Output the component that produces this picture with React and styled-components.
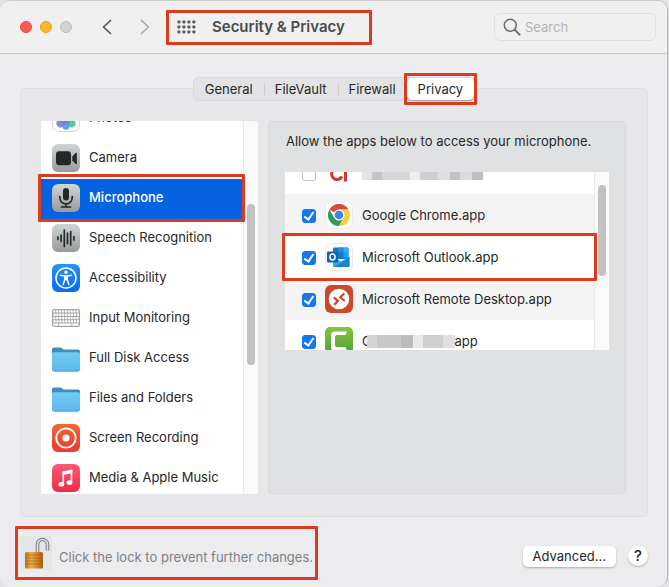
import React from "react"
import styled, { createGlobalStyle, css } from 'styled-components';

const panes = [
    { name: 'Photos', Icon: PhotosIcon },
    { name: 'Camera', Icon: CameraIcon },
    { name: 'Microphone', Icon: MicrophoneIcon },
    { name: 'Speech Recognition', Icon: SpeechIcon },
    { name: 'Accessibility', Icon: AccessibilityIcon },
    { name: 'Input Monitoring', Icon: KeyboardIcon },
    { name: 'Full Disk Access', Icon: FolderIcon },
    { name: 'Files and Folders', Icon: FolderIcon },
    { name: 'Screen Recording', Icon: RecordingIcon },
    { name: 'Media & Apple Music', Icon: MusicIcon },
]

const apps = [
    { id: 'hidden', Icon: RedIcon, mask: 'top', checked: false },
    { id: 'chrome', name: 'Google Chrome.app', Icon: ChromeIcon, checked: true },
    { id: 'outlook', name: 'Microsoft Outlook.app', Icon: OutlookIcon, checked: true },
    { id: 'remote', name: 'Microsoft Remote Desktop.app', Icon: RemoteIcon, checked: true },
    { id: 'recorder', Icon: RecorderIcon, mask: 'bottom', checked: true },
]

const tabs = ['General', 'FileVault', 'Firewall', 'Privacy']

export default function App() {
    return (
        <>
            <GlobalStyle />
            <WindowStyle>
                <HeaderStyle>
                    <LightsStyle>
                        <Light $color="#fb5b53" $edge="#df4a43" aria-label="Close" />
                        <Light $color="#fcb827" $edge="#dfa023" aria-label="Minimize" />
                        <Light $color="#d3d3d4" $edge="#bdbdbe" aria-label="Zoom" disabled />
                    </LightsStyle>
                    <NavStyle>
                        <IconBtn aria-label="Back">
                            <svg width="10" height="16" viewBox="0 0 10 16" fill="none" stroke="#555" strokeWidth="1.7" strokeLinecap="round" strokeLinejoin="round"><path d="M8.5 1.5 1.5 8l7 6.5" /></svg>
                        </IconBtn>
                        <IconBtn aria-label="Forward">
                            <svg width="10" height="16" viewBox="0 0 10 16" fill="none" stroke="#aaa" strokeWidth="1.7" strokeLinecap="round" strokeLinejoin="round"><path d="m1.5 1.5 7 6.5-7 6.5" /></svg>
                        </IconBtn>
                    </NavStyle>
                    <TitleStyle>
                        <IconBtn aria-label="Show All"><GridIcon /></IconBtn>
                        <h1>Security &amp; Privacy</h1>
                    </TitleStyle>
                    <SearchStyle>
                        <svg width="18" height="18" viewBox="0 0 18 18" fill="none" stroke="#6c6c6e" strokeWidth="1.5" strokeLinecap="round"><circle cx="7.3" cy="7.3" r="6" /><path d="m11.8 11.8 4.8 4.8" strokeWidth="2" /></svg>
                        <input type="search" placeholder="Search" aria-label="Search" />
                    </SearchStyle>
                </HeaderStyle>

                <BodyStyle>
                    <TabsStyle role="tablist">
                        {tabs.map((tab) => <Tab key={tab} role="tab" aria-selected={tab === 'Privacy'} $active={tab === 'Privacy'}>{tab}</Tab>)}
                    </TabsStyle>
                    <PanelStyle>
                        <SidebarStyle>
                            <ScrollStyle>
                                <PaneList>
                                    {panes.map(({ name, Icon }) => (
                                        <PaneRow key={name} $active={name === 'Microphone'}>
                                            <Icon />
                                            <span>{name}</span>
                                        </PaneRow>
                                    ))}
                                </PaneList>
                                <Track><Thumb $top={83} $height={161} /></Track>
                            </ScrollStyle>
                            <PaneMark />
                        </SidebarStyle>
                        <AccessStyle>
                            <p>Allow the apps below to access your microphone.</p>
                            <AppsStyle>
                                <ScrollStyle>
                                    <AppList>
                                        {apps.map(({ id, name, Icon, mask, checked }) => (
                                            <AppRow key={id}>
                                                <Check type="checkbox" id={id} defaultChecked={checked} aria-label={mask && 'App'} />
                                                <Icon />
                                                {name && <label htmlFor={id}>{name}</label>}
                                                {mask === 'top' && <MaskTop />}
                                                {mask === 'bottom' && <label htmlFor={id}>C<MaskBottom />app</label>}
                                            </AppRow>
                                        ))}
                                    </AppList>
                                    <Track><Thumb $top={13} $height={91} /></Track>
                                </ScrollStyle>
                                <AppMark />
                            </AppsStyle>
                        </AccessStyle>
                    </PanelStyle>
                </BodyStyle>

                <FooterStyle>
                    <LockStyle>
                        <LockBtn aria-label="Lock"><LockIcon /></LockBtn>
                        <span>Click the lock to prevent further changes.</span>
                    </LockStyle>
                    <ActionsStyle>
                        <Advanced>Advanced...</Advanced>
                        <Help>?</Help>
                    </ActionsStyle>
                </FooterStyle>
            </WindowStyle>
        </>
    )
}

function GridIcon() {
    return (
        <svg width="19" height="14" viewBox="0 0 19 14" fill="#5c5c5e">
            {[0, 5, 10].map((y) => [0, 5, 10, 15].map((x) => <rect key={`${x}-${y}`} x={x + 0.4} y={y + 0.4} width="3" height="3" rx="0.8" />))}
        </svg>
    )
}

function PhotosIcon() {
    const petals = ['#f7a13a', '#f3d33b', '#8fcb48', '#4fb886', '#3f97e0', '#7a72d2', '#b968c2', '#ee6a5f']
    return (
        <svg width="28" height="28" viewBox="0 0 28 28">
            <rect x="0.5" y="0.5" width="27" height="27" rx="6.5" fill="#fff" stroke="#d4d4d6" />
            {petals.map((fill, i) => <rect key={fill} x="10.3" y="2.2" width="7.4" height="11.3" rx="3.7" fill={fill} opacity="0.85" transform={`rotate(${i * 45} 14 14)`} />)}
        </svg>
    )
}

function GrayTile({ children }) {
    return (
        <svg width="28" height="28" viewBox="0 0 28 28">
            <defs>
                <linearGradient id="gray-tile" x2="0" y2="1"><stop stopColor="#ced6d5" /><stop offset="1" stopColor="#999a9b" /></linearGradient>
            </defs>
            <rect width="28" height="28" rx="6" fill="url(#gray-tile)" />
            {children}
        </svg>
    )
}

function CameraIcon() {
    return (
        <GrayTile>
            <rect x="4" y="7.3" width="15" height="14" rx="3.2" fill="#252729" />
            <path d="M20.3 12.6 23.6 9q1.3-1 1.3.7v9.6q0 1.7-1.3.7l-3.3-3.6z" fill="#252729" />
        </GrayTile>
    )
}

function MicrophoneIcon() {
    return (
        <GrayTile>
            <rect x="11" y="4" width="6" height="12.5" rx="3" fill="#252729" />
            <path d="M7.8 12.5v1.2a6.2 6.2 0 0 0 12.4 0v-1.2M14 20v2.8M9.5 23h9" fill="none" stroke="#252729" strokeWidth="1.7" strokeLinecap="round" />
        </GrayTile>
    )
}

function SpeechIcon() {
    return (
        <GrayTile>
            <path d="M5.9 13v2.5M9.1 11v6.5M12.3 6v16.5M15.5 9v10.5M18.7 7.5v13.5M21.9 12.5v3.5" fill="none" stroke="#252729" strokeWidth="1.7" strokeLinecap="round" />
        </GrayTile>
    )
}

function AccessibilityIcon() {
    return (
        <svg width="28" height="28" viewBox="0 0 28 28">
            <defs>
                <linearGradient id="blue-tile" x2="0" y2="1"><stop stopColor="#2994f8" /><stop offset="1" stopColor="#076bf0" /></linearGradient>
            </defs>
            <rect width="28" height="28" rx="6" fill="url(#blue-tile)" />
            <circle cx="14" cy="14" r="10" fill="none" stroke="#fff" strokeWidth="1.5" />
            <circle cx="14" cy="8.3" r="1.7" fill="#fff" />
            <path d="M8.7 11.2 12.8 12v3.3L11.2 20.5M19.3 11.2 15.2 12v3.3l1.6 5.2" fill="none" stroke="#fff" strokeWidth="1.4" strokeLinecap="round" strokeLinejoin="round" />
            <path d="M12.3 11.4h3.4v5h-3.4z" fill="#fff" />
        </svg>
    )
}

function KeyboardIcon() {
    return (
        <svg width="28" height="28" viewBox="0 0 28 28">
            <rect x="0.5" y="5.5" width="27" height="17" rx="1" fill="#a6a7a9" stroke="#a7a8aa" />
            {[0, 1, 2, 3].map((row) => Array.from({ length: 9 }, (_, i) => (
                <rect key={`${row}-${i}`} x={1.2 + i * 2.9 + (row % 2) * 0.3} y={6.3 + row * 3.3} width="2.2" height="2.3" rx="0.4" fill="#fff" />
            )))}
            <path d="M1.2 19.6h5v2.2h-5zM7 19.6h12.5v2.2H7zM20.3 19.6h6.2v2.2h-6.2z" fill="#fff" />
        </svg>
    )
}

function FolderIcon() {
    return (
        <svg width="28" height="28" viewBox="0 0 28 28">
            <defs>
                <linearGradient id="folder" x2="0" y2="1"><stop stopColor="#72c9f3" /><stop offset="1" stopColor="#5bb9ea" /></linearGradient>
            </defs>
            <path d="M0 5.5q0-2 2-2h6q1.2 0 2 .8l.8.7q.7.5 1.7.5H26q2 0 2 2V14H0z" fill="#3e8dbd" />
            <path d="M0 10q0-1.7 1.7-1.7h24.6Q28 8.3 28 10v15q0 2.5-2.5 2.5h-23Q0 27.5 0 25z" fill="url(#folder)" />
            <path d="M.5 25.5q.3 1.7 2 1.7h23q1.7 0 2-1.7" fill="none" stroke="#4aa5d3" strokeWidth="0.8" />
        </svg>
    )
}

function RecordingIcon() {
    return (
        <svg width="28" height="28" viewBox="0 0 28 28">
            <defs>
                <linearGradient id="orange-tile" x2="0" y2="1"><stop stopColor="#f4672f" /><stop offset="1" stopColor="#ee3739" /></linearGradient>
            </defs>
            <rect width="28" height="28" rx="6" fill="url(#orange-tile)" />
            <circle cx="14" cy="14" r="9.7" fill="none" stroke="#fff" strokeWidth="1.8" />
            <circle cx="14" cy="14" r="3.6" fill="#fff" />
        </svg>
    )
}

function MusicIcon() {
    return (
        <svg width="28" height="28" viewBox="0 0 28 28">
            <defs>
                <linearGradient id="pink-tile" x2="0" y2="1"><stop stopColor="#f75a74" /><stop offset="1" stopColor="#f52a47" /></linearGradient>
            </defs>
            <rect width="28" height="28" rx="6" fill="url(#pink-tile)" />
            <path d="M11.3 19.5V8.3l8.2-1.8v11.2" fill="none" stroke="#fff" strokeWidth="1.6" strokeLinejoin="round" />
            <path d="M10.5 7.7 20.3 5.5v3.6l-9.8 2.2z" fill="#fff" />
            <ellipse cx="9.3" cy="20.3" rx="2.9" ry="2.3" fill="#fff" />
            <ellipse cx="17.5" cy="18.5" rx="2.9" ry="2.3" fill="#fff" />
        </svg>
    )
}

function RedIcon() {
    return (
        <svg width="28" height="28" viewBox="0 0 28 28" fill="none" stroke="#d2342f" strokeWidth="3">
            <path d="M17 17.5A5.5 5.5 0 1 1 17 12.5M20.5 7v15.5" />
        </svg>
    )
}

function ChromeIcon() {
    return (
        <svg width="28" height="28" viewBox="0 0 28 28">
            <rect x="0.5" y="0.5" width="27" height="27" rx="6" fill="#fff" stroke="#e9e9ea" />
            <path d="M14 14 4.47 8.5A11 11 0 0 1 23.53 8.5L14 8.5z" fill="#d9483b" />
            <path d="M4.47 8.5A11 11 0 0 0 14 25L18.8 16.7 14 14 9.2 16.7z" fill="#2e9c57" />
            <path d="M23.53 8.5A11 11 0 0 1 14 25l4.8-8.2L14 8.5z" fill="#f8cd3e" />
            <circle cx="14" cy="14" r="5.5" fill="#fff" />
            <circle cx="14" cy="14" r="4.3" fill="#4581ea" />
        </svg>
    )
}

function OutlookIcon() {
    return (
        <svg width="28" height="28" viewBox="0 0 28 28">
            <rect x="0.5" y="0.5" width="27" height="27" rx="6" fill="#fff" stroke="#e9e9ea" />
            <path d="M9 4.5h13.5q1 0 1 1V16H8V5.5q0-1 1-1z" fill="#1579cb" />
            <path d="M13 4.5h5.5v5H13z" fill="#1d92dd" />
            <path d="M18.5 4.5h4q1 0 1 1v4h-5z" fill="#39aff0" />
            <path d="M18.5 9.5h5v5h-5z" fill="#28a0e8" />
            <path d="M8 13.5 16 18.5l8.5-5V23q0 1-1 1H9q-1 0-1-1z" fill="#35a9e7" />
            <path d="m9 24 15.5-10v9q0 1-1 1z" fill="#1b83d0" />
            <rect x="2" y="8.5" width="11" height="11" rx="1" fill="#0e64b5" />
            <ellipse cx="7.5" cy="14" rx="2.6" ry="2.9" fill="none" stroke="#fff" strokeWidth="1.5" />
        </svg>
    )
}

function RemoteIcon() {
    return (
        <svg width="28" height="28" viewBox="0 0 28 28">
            <rect width="28" height="28" rx="6" fill="#cb472d" />
            <circle cx="14" cy="14" r="10.3" fill="#fff" />
            <path d="m8.8 12.3 4.2 3.5-3.7 3.9M19.3 8.5l-4 3.8 4.4 3.7" fill="none" stroke="#cb472d" strokeWidth="2.2" />
        </svg>
    )
}

function RecorderIcon() {
    return (
        <svg width="28" height="28" viewBox="0 0 28 28">
            <defs>
                <linearGradient id="green-tile" x2="0" y2="1"><stop stopColor="#86c440" /><stop offset="1" stopColor="#4a9e36" /></linearGradient>
            </defs>
            <rect width="28" height="28" rx="5" fill="url(#green-tile)" />
            <path d="M22 4.5 20.5 8H12q-2 0-2 2v8q0 2 2 2h8.5l1.5 4H10q-4 0-4-4V8.5q0-4 4-4z" fill="#fff" />
        </svg>
    )
}

function LockIcon() {
    return (
        <svg width="32" height="34" viewBox="0 0 32 34">
            <defs>
                <linearGradient id="brass"><stop stopColor="#b9701d" /><stop offset="0.35" stopColor="#efac49" /><stop offset="1" stopColor="#a9600f" /></linearGradient>
            </defs>
            <path d="M17.5 16V8.5a5 5 0 0 1 10 0V14.5" fill="none" stroke="#75777a" strokeWidth="3.6" />
            <path d="M17.5 16V8.5a5 5 0 0 1 10 0V14.5" fill="none" stroke="#dfe1e3" strokeWidth="1.7" />
            <rect x="5" y="16" width="18" height="16.5" rx="1.5" fill="url(#brass)" />
            <path d="M5 19h18M5 22h18M5 25h18M5 28h18" stroke="#935611" strokeWidth="0.7" opacity="0.7" />
        </svg>
    )
}

const GlobalStyle = createGlobalStyle`
* {
    box-sizing: border-box;
}

body {
    margin: 0;
    background-color: #e4e4e6;
    color: #272729;
    font-family: Inter, "Liberation Sans", sans-serif;
    font-size: 13px;
    line-height: 16px;
}

button, input {
    font: inherit;
    color: inherit;
}

button {
    padding: 0;
    border: none;
    background: none;
}
`

const redBorder = css`
border: 3px solid #de3a1d;
border-radius: 1px;
`

const WindowStyle = styled.main`
display: flex;
flex-direction: column;

height: 100vh;
min-height: 560px;
margin-right: 1px;

background-color: #ececee;
border-top: 1px solid #c9c9cb;
border-right: 1px solid #b5b5b7;
border-radius: 10px;
overflow: hidden;
`

const HeaderStyle = styled.header`
display: flex;
align-items: center;
flex-shrink: 0;

height: 53px;
padding: 0 11px 0 20px;

background-color: #f0f0f1;
border-bottom: 1px solid #c4c4c6;
`

const LightsStyle = styled.div`
display: flex;
gap: 8px;
`

const Light = styled.button`
width: 12px;
height: 12px;

background-color: ${(props) => props.$color};
border: 1px solid ${(props) => props.$edge};
border-radius: 50%;
`

const NavStyle = styled.div`
display: flex;
gap: 28px;
margin-left: 30px;
`

const IconBtn = styled.button`
display: flex;
`

const TitleStyle = styled.div`
display: flex;
align-items: center;
gap: 16px;

height: 35px;
margin-left: 16px;
padding: 0 24px 0 8px;

${redBorder}

h1{
    margin: 0;

    color: #4a4a4c;
    font-size: 15px;
    font-weight: 600;
    line-height: 20px;
}
`

const SearchStyle = styled.label`
display: flex;
align-items: center;
gap: 4px;

width: 162px;
height: 28px;
margin-left: auto;
padding: 0 8px;

border: 1px solid #e0e0e2;
border-radius: 6px;

svg{
    flex-shrink: 0;
}
input{
    width: 100%;
    min-width: 0;
    padding: 0;

    background: none;
    border: none;
    outline: none;
}
input::placeholder{
    color: #b2b2b4;
}
`

const BodyStyle = styled.section`
display: flex;
flex: 1;
flex-direction: column;

min-height: 0;
padding: 24px 19px 0 20px;
`

const TabsStyle = styled.div`
display: flex;
align-self: center;
position: relative;
z-index: 1;

height: 22px;
margin-bottom: -12px;

background-color: #e3e3e5;
border-radius: 5px;
box-shadow: 0 0 0 1px #d9d9db;
`

const Tab = styled.button`
position: relative;
padding: 0 11px;

& + &::before{
    content: "";
    position: absolute;
    top: 5px;
    left: 0;
    width: 1px;
    height: 12px;
    background-color: #cbcbcd;
}

${(props) => props.$active && css`
    background-color: #fff;
    border-radius: 5px;
    box-shadow: 0 1px 2px #0005;

    &&::before{
        display: none;
    }
    &::after{
        content: "";
        position: absolute;
        inset: -5px -3px;
        ${redBorder}
    }
`}
`

const PanelStyle = styled.div`
display: grid;
flex: 1;
grid-template-columns: minmax(0, 217fr) minmax(0, 358fr);
grid-template-rows: minmax(0, 1fr);
gap: 10px;

min-height: 0;
padding: 32px 21px 22px 20px;

background-color: #e7e7e9;
border: 1px solid #dedee0;
border-radius: 5px;
`

const SidebarStyle = styled.aside`
position: relative;
`

const ScrollStyle = styled.div`
display: flex;
height: 100%;
overflow: hidden;
background-color: #fff;
`

const PaneList = styled.ul`
flex: 1;
margin: -22px 0 0;
padding: 0;
list-style: none;
`

const PaneRow = styled.li`
display: flex;
align-items: center;
gap: 9px;

height: 40px;
padding: 0 11px 2px;

span{
    padding-bottom: 2px;
    white-space: nowrap;
}

${(props) => props.$active && css`
    background-color: #0562e0;
    color: #fff;
    font-weight: 500;
`}
`

const PaneMark = styled.div`
position: absolute;
top: 53px;
left: -3px;
right: 13px;
height: 48px;
${redBorder}
`

const Track = styled.div`
flex-shrink: 0;
width: 15px;
background-color: #fafafa;
border-left: 1px solid #e8e8e8;
`

const Thumb = styled.div`
width: 8px;
height: ${(props) => props.$height}px;
margin: ${(props) => props.$top}px auto 0;

background-color: #c2c2c3;
border-radius: 4px;
`

const AccessStyle = styled.section`
padding: 11px 16px;

background-color: #e0e1e3;
border: 1px solid #d8d8da;
border-radius: 4px;

p{
    margin: 0 0 23px 1px;
}
`

const AppsStyle = styled.div`
position: relative;
height: 178px;
`

const AppList = styled.ul`
flex: 1;
margin: -20px 0 0;
padding: 0;
list-style: none;
`

const AppRow = styled.li`
display: flex;
align-items: center;

height: 42px;
padding-left: 17px;

&:nth-child(even){
    background-color: #f4f4f5;
}
svg{
    flex-shrink: 0;
    margin: 0 9px;
}
label{
    display: flex;
    white-space: nowrap;
}
`

const Check = styled.input`
appearance: none;
display: flex;
justify-content: center;
flex-shrink: 0;

width: 14px;
height: 14px;
margin: 2px 0 0;

background-color: #fff;
border: 1px solid #c4c4c6;
border-radius: 3px;

&:checked{
    background-color: #1477ee;
    border-color: #1477ee;
}
&:checked::after{
    content: "";
    box-sizing: border-box;
    width: 6px;
    height: 10px;
    border: solid #fff;
    border-width: 0 2px 2px 0;
    transform: rotate(35deg);
}
`

const MaskTop = styled.i`
width: 121px;
height: 14px;
background: linear-gradient(90deg, #e4e4e5 0 10px, #c4c4c6 10px 20px, #d6d6d8 20px 48px, #eee 48px 58px, #cfcfd1 58px 76px, #dedee0 76px 88px, #c2c2c4 88px 98px, #dcdcde 98px 110px, #bfbfc1 110px);
`

const MaskBottom = styled.i`
width: 88px;
height: 13px;
margin: 2px 0 0 -5px;
background: linear-gradient(90deg, #d4d4d6 0 10px, #c8c8ca 10px 34px, #bcbcbe 34px 46px, #e9e9ea 46px 56px, #cfcfd1 56px 76px, #e0e0e2 76px);
`

const AppMark = styled.div`
position: absolute;
top: 61px;
left: -3px;
right: 12px;
height: 48px;
${redBorder}
`

const FooterStyle = styled.footer`
display: flex;
align-items: center;
justify-content: space-between;
flex-shrink: 0;

padding: 9px 19px 7px 15px;
`

const LockStyle = styled.div`
display: flex;
align-items: center;
gap: 7px;

height: 54px;
padding: 0 2px;

color: #818183;
white-space: nowrap;

${redBorder}

span{
    padding-top: 8px;
}
`

const LockBtn = styled.button`
display: flex;
background-color: #e4e5e6;
border-radius: 3px;
`

const ActionsStyle = styled.div`
display: flex;
align-items: center;
gap: 12px;
padding-top: 6px;
`

const Advanced = styled.button`
height: 21px;
padding: 0 10px;

background-color: #fff;
border-radius: 5px;
box-shadow: 0 1px 2px #0004;
`

const Help = styled.button`
width: 20px;
height: 20px;

background-color: #fff;
border-radius: 50%;
box-shadow: 0 1px 2px #0004;

font-size: 15px;
font-weight: 500;
`
